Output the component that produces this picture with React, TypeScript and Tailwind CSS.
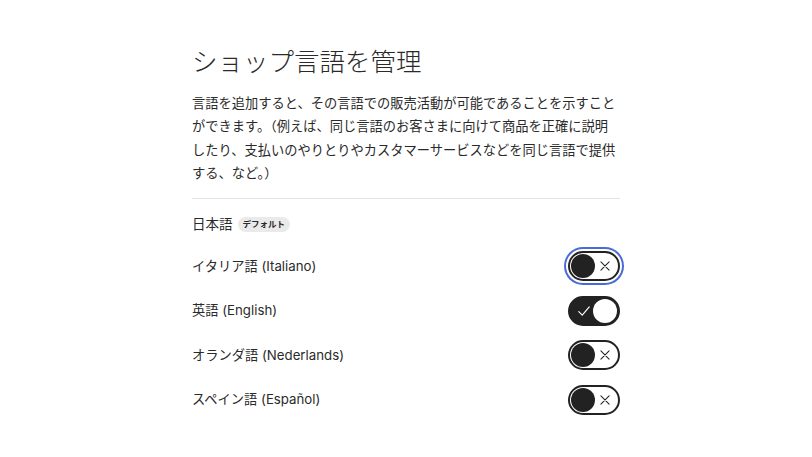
import { useState } from "react";

type Lang = { id: string; label: string; on: boolean; focused?: boolean };

const initial: Lang[] = [
  { id: "it", label: "イタリア語 (Italiano)", on: false, focused: true },
  { id: "en", label: "英語 (English)", on: true },
  { id: "nl", label: "オランダ語 (Nederlands)", on: false },
  { id: "es", label: "スペイン語 (Español)", on: false },
];

function Toggle({ on, focused, onClick }: { on: boolean; focused?: boolean; onClick: () => void }) {
  return (
    <button
      onClick={onClick}
      className={`relative flex h-[30px] w-[52px] items-center rounded-full border-2 border-[#222] px-[1px] ${
        on ? "bg-[#222] justify-end" : "bg-white justify-start"
      } ${focused ? "ring-2 ring-[#4a6bd6] ring-offset-[2px]" : ""}`}
    >
      {on ? (
        <>
          <svg className="absolute left-[7px] top-1/2 -translate-y-1/2" width="14" height="14" viewBox="0 0 24 24" fill="none" stroke="white" strokeWidth="2" strokeLinecap="round" strokeLinejoin="round">
            <path d="M3 13l6 6L21 5" />
          </svg>
          <span className="h-[24px] w-[24px] rounded-full bg-white" />
        </>
      ) : (
        <>
          <span className="h-[24px] w-[24px] rounded-full bg-[#222]" />
          <svg className="absolute right-[6px] top-1/2 -translate-y-1/2" width="14" height="14" viewBox="0 0 24 24" fill="none" stroke="#222" strokeWidth="1.8" strokeLinecap="round">
            <path d="M5 5l14 14M19 5L5 19" />
          </svg>
        </>
      )}
    </button>
  );
}

export default function App() {
  const [langs, setLangs] = useState(initial);

  const toggle = (id: string) =>
    setLangs((ls) => ls.map((l) => (l.id === id ? { ...l, on: !l.on } : l)));

  return (
    <div
      className="min-h-screen bg-white text-[#2a2a2a]"
      style={{ fontFamily: "Inter, 'Noto Sans CJK JP', sans-serif" }}
    >
      <div className="mx-auto w-[428px] pt-[45px]">
        <h1 className="text-[25.5px] leading-[33px] font-light">ショップ言語を管理</h1>
        <p className="mt-[14px] text-[13.25px] leading-[23.3px]">
          言語を追加すると、その言語での販売活動が可能であることを示すことができます。（例えば、同じ言語のお客さまに向けて商品を正確に説明したり、支払いのやりとりやカスタマーサービスなどを同じ言語で提供する、など。）
        </p>
        <div className="mt-[13px] h-px bg-[#e3e3e3]" />

        <div className="mt-[15px] flex h-[20px] items-center gap-[5px]">
          <span className="text-[13.5px]">日本語</span>
          <span className="rounded-full bg-[#eaeaea] px-[5px] py-[1px] text-[8.5px] font-bold leading-[13px]">
            デフォルト
          </span>
        </div>

        <div className="mt-[10px]">
          {langs.map((l) => (
            <div key={l.id} className="flex h-[44.5px] items-center justify-between">
              <span className="text-[13.25px]">{l.label}</span>
              <Toggle on={l.on} focused={l.focused} onClick={() => toggle(l.id)} />
            </div>
          ))}
        </div>
      </div>
    </div>
  );
}
